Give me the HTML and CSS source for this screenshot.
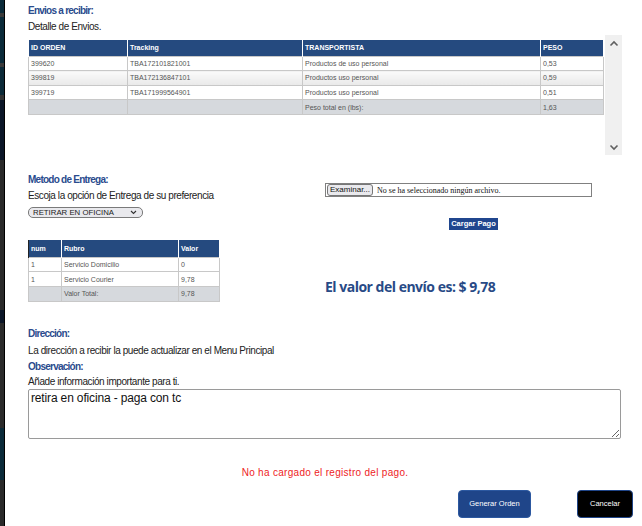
FILE: index.html
```html
<!DOCTYPE html>
<html lang="es">
<head>
<meta charset="utf-8">
<title>Envios a recibir</title>
<link rel="stylesheet" href="styles.css">
</head>
<body>
<div class="backdrop"></div>
<main class="modal">
  <section class="envios">
    <h2 class="title">Envios a recibir:</h2>
    <p class="text gap-2">Detalle de Envios.</p>
    <div class="scroll-area">
      <div class="scroll-content">
        <table class="grid grid-envios">
          <colgroup><col class="c-id"><col class="c-track"><col class="c-trans"><col class="c-peso"></colgroup>
          <thead>
            <tr><th>ID ORDEN</th><th>Tracking</th><th>TRANSPORTISTA</th><th>PESO</th></tr>
          </thead>
          <tbody>
            <tr><td>399620</td><td>TBA172101821001</td><td>Productos de uso personal</td><td>0,53</td></tr>
            <tr class="alt"><td>399819</td><td>TBA172136847101</td><td>Productos uso personal</td><td>0,59</td></tr>
            <tr><td>399719</td><td>TBA171999564901</td><td>Productos uso personal</td><td>0,51</td></tr>
            <tr class="total"><td></td><td></td><td>Peso total en (lbs):</td><td>1,63</td></tr>
          </tbody>
        </table>
      </div>
      <div class="scrollbar">
        <svg class="arrow" width="10" height="7" viewBox="0 0 10 7"><polyline points="1.5,5.5 5,2 8.5,5.5" fill="none" stroke="#606060" stroke-width="1.6"/></svg>
        <svg class="arrow" width="10" height="7" viewBox="0 0 10 7"><polyline points="1.5,1.5 5,5 8.5,1.5" fill="none" stroke="#606060" stroke-width="1.6"/></svg>
      </div>
    </div>
  </section>

  <section class="entrega">
    <div class="col-left">
      <h2 class="title">Metodo de Entrega:</h2>
      <p class="text gap-2">Escoja la opción de Entrega de su preferencia</p>
      <div class="select">
        <span>RETIRAR EN OFICINA</span>
        <svg width="7" height="5" viewBox="0 0 7 5"><polyline points="1,1 3.5,3.5 6,1" fill="none" stroke="#333" stroke-width="1.1"/></svg>
      </div>
      <table class="grid grid-valor">
        <colgroup><col class="c-num"><col class="c-rubro"><col class="c-valor"></colgroup>
        <thead>
          <tr><th class="first">num</th><th>Rubro</th><th>Valor</th></tr>
        </thead>
        <tbody>
          <tr><td>1</td><td>Servicio Domicilio</td><td>0</td></tr>
          <tr><td>1</td><td>Servicio Courier</td><td>9,78</td></tr>
          <tr class="total"><td></td><td>Valor Total:</td><td>9,78</td></tr>
        </tbody>
      </table>
    </div>
    <div class="col-right">
      <div class="file-input">
        <span class="file-btn">Examinar...</span>
        <span class="file-name">No se ha seleccionado ningún archivo.</span>
      </div>
      <div class="upload-row"><span class="btn-upload">Cargar Pago</span></div>
      <p class="total-value">El valor del envío es: $ 9,78</p>
    </div>
  </section>

  <section class="direccion">
    <h2 class="title">Dirección:</h2>
    <p class="text gap-3">La dirección a recibir la puede actualizar en el Menu Principal</p>
    <h2 class="title gap-2">Observación:</h2>
    <p class="text gap-1">Añade información importante para ti.</p>
    <textarea class="obs">retira en oficina - paga con tc</textarea>
  </section>

  <p class="alert">No ha cargado el registro del pago.</p>

  <div class="actions">
    <span class="btn btn-primary">Generar Orden</span>
    <span class="btn btn-dark">Cancelar</span>
  </div>
</main>
</body>
</html>
```
FILE: styles.css
```css
html, body {
  margin: 0;
  padding: 0;
  height: 526px;
  overflow: hidden;
  background: #fff;
}

body {
  display: flex;
  font-family: "Liberation Sans", Arial, sans-serif;
  color: #222;
}

.backdrop {
  width: 4px;
  flex: none;
  background: linear-gradient(to bottom,
    #0b2b3a 0, #0b2b3a 13px, #3a3a3a 13px, #3a3a3a 17px,
    #0b2b3a 17px, #0b2b3a 63px, #3a3a3a 63px, #3a3a3a 67px,
    #0c2a38 67px, #0c2a38 95px, #333 95px, #333 100px,
    #0b1628 100px, #0b1628 160px, #2a2a2a 160px, #2a2a2a 310px,
    #0b1628 310px, #0b1628 323px, #2b2b2b 323px, #2b2b2b 428px,
    #0b2b3a 428px, #0b2b3a 480px, #2a2a2a 480px, #2a2a2a 526px);
}

.modal {
  flex: 1;
  border-left: 1px solid #000;
  padding: 4px 21px 0 23px;
  display: flex;
  flex-direction: column;
}

.title {
  margin: 0;
  font-size: 10px;
  line-height: 14px;
  font-weight: bold;
  letter-spacing: -0.75px;
  color: #2a4b8d;
}

.text {
  margin: 0;
  font-size: 10px;
  line-height: 14px;
  letter-spacing: -0.42px;
  color: #222;
}

.gap-1 { margin-top: 1px; }
.gap-2 { margin-top: 2px; }
.gap-3 { margin-top: 3px; }

/* ---------- Envios table ---------- */
.scroll-area {
  display: flex;
  height: 120px;
  margin-top: 1px;
  gap: 1px;
}

.scroll-content {
  flex: 1;
  padding-top: 5px;
}

.scrollbar {
  width: 17px;
  flex: none;
  background: #f0f0f0;
  display: flex;
  flex-direction: column;
  justify-content: space-between;
  align-items: center;
  padding: 5px 0 4px;
  box-sizing: border-box;
}

.arrow { display: block; }

.grid {
  border-collapse: collapse;
  table-layout: fixed;
  font-family: "Liberation Sans", Arial, sans-serif;
  font-size: 7px;
  color: #555;
}

.grid th {
  background: #254a7f;
  color: #fff;
  font-weight: bold;
  text-align: left;
  padding: 0 2px;
  border-left: 1px solid #fff;
  border-right: 1px solid #fff;
}

.grid td {
  padding: 0 2px;
  border: 1px solid #c8c8c8;
  background: #fff;
  white-space: nowrap;
  overflow: hidden;
}

.grid tr.alt td {
  background: linear-gradient(to bottom, #fafafa, #e9e9e9);
}

.grid tr.total td {
  background: #d6d9dd;
}

.grid-envios { width: 575px; }
.grid-envios thead tr { height: 16px; }
.grid-envios tbody tr { height: 14.6px; }
.c-id { width: 99px; }
.c-track { width: 175px; }
.c-trans { width: 238px; }
.c-peso { width: 63px; }

/* ---------- Entrega ---------- */
.entrega {
  display: grid;
  grid-template-columns: 297px 1fr;
  margin-top: 18px;
}

.select {
  margin-top: 4px;
  width: 115px;
  height: 11px;
  box-sizing: border-box;
  border: 1px solid #7a7a7a;
  border-radius: 5px;
  background: #e9e9ed;
  display: flex;
  align-items: center;
  justify-content: space-between;
  padding: 0 5px 0 4px;
  font-family: "Liberation Sans", Arial, sans-serif;
  font-size: 7.8px;
  color: #222;
}

.grid-valor {
  width: 191px;
  margin-top: 22px;
}
.grid-valor thead tr { height: 17px; }
.grid-valor tbody tr { height: 14.7px; }
.grid-valor th.first { border-left: 1px solid #222; }
.c-num { width: 33px; }
.c-rubro { width: 117px; }
.c-valor { width: 41px; }

.col-right {
  display: flex;
  flex-direction: column;
}

.file-input {
  margin-top: 10px;
  width: 267px;
  height: 14px;
  box-sizing: border-box;
  border: 1px solid #808080;
  display: flex;
  align-items: center;
  padding-left: 1px;
}

.file-btn {
  height: 12px;
  box-sizing: border-box;
  border: 1px solid #767676;
  border-radius: 3px;
  background: #e9e9ed;
  font-family: "Liberation Sans", Arial, sans-serif;
  font-size: 8px;
  line-height: 10px;
  padding: 0 2px;
  color: #111;
}

.file-name {
  margin-left: 4px;
  font-family: "Liberation Serif", "Times New Roman", serif;
  font-size: 8px;
  color: #111;
}

.upload-row {
  display: flex;
  justify-content: center;
  margin-top: 21px;
}

.btn-upload {
  background: #20468e;
  color: #fff;
  font-family: "Liberation Sans", Arial, sans-serif;
  font-weight: bold;
  font-size: 7.5px;
  line-height: 12px;
  padding: 0 2px;
}

.total-value {
  margin: 48px 0 0;
  font-family: "Open Sans", sans-serif;
  font-weight: 700;
  font-size: 14px;
  line-height: 18px;
  letter-spacing: -0.5px;
  color: #284a86;
}

/* ---------- Direccion ---------- */
.direccion {
  display: flex;
  flex-direction: column;
  margin-top: 25px;
}

.obs {
  display: block;
  width: 593px;
  height: 50px;
  box-sizing: border-box;
  margin: 0;
  border: 1px solid #9a9a9a;
  border-radius: 2px;
  padding: 2px 2px;
  font-family: "Liberation Sans", Arial, sans-serif;
  font-size: 12px;
  line-height: 13px;
  letter-spacing: -0.15px;
  color: #111;
  resize: both;
}

.alert {
  margin: 27px 0 0;
  text-align: center;
  font-family: "Liberation Sans", Arial, sans-serif;
  font-size: 10px;
  line-height: 14px;
  letter-spacing: 0.3px;
  color: #ee1c25;
}

.actions {
  display: flex;
  justify-content: flex-end;
  gap: 46px;
  margin: 10px -11px 0 0;
}

.btn {
  height: 28px;
  box-sizing: border-box;
  border-radius: 4px;
  display: flex;
  align-items: center;
  justify-content: center;
  font-family: "Liberation Sans", Arial, sans-serif;
  font-size: 7.5px;
  color: #fff;
}

.btn-primary {
  width: 73px;
  background: #1f4589;
  border: 1px solid #2c58a0;
}

.btn-dark {
  width: 56px;
  background: #000;
  border: 1px solid #1f4589;
}
```
